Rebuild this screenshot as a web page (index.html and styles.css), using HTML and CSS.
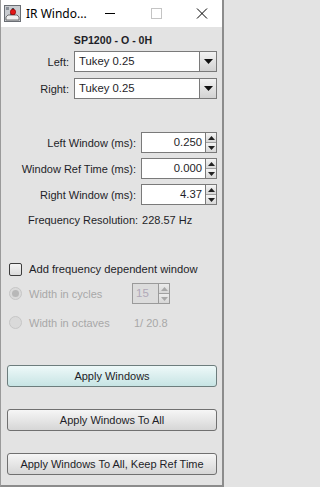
FILE: index.html
```html
<!DOCTYPE html>
<html>
<head>
<meta charset="utf-8">
<link rel="stylesheet" href="styles.css">
</head>
<body>
<div class="window">
  <div class="titlebar">
    <svg class="app-icon" width="17" height="17" viewBox="0 0 17 17">
      <rect x="0.5" y="0.5" width="16" height="16" fill="#c9ccd0" stroke="#6a6e74" stroke-width="1"/>
      <path d="M2 12 L4 10 H13 L15 12 V15 H2 Z" fill="#f0f0f0" stroke="#555" stroke-width="0.8"/>
      <path d="M6 10 L8 3 L10 3 L11 10 Z" fill="#4a4e56"/>
      <circle cx="9" cy="7" r="2.7" fill="#e41818" stroke="#8a0000" stroke-width="0.6"/>
      <rect x="2" y="2" width="3" height="3" fill="#8a9098"/>
    </svg>
    <span class="title-text">IR Windo...</span>
    <div class="title-controls">
      <svg class="ctl ctl-min" width="46" height="27" viewBox="0 0 46 27"><line x1="18" y1="13.5" x2="28" y2="13.5" stroke="#000" stroke-width="1"/></svg>
      <svg class="ctl ctl-max" width="46" height="27" viewBox="0 0 46 27"><rect x="18.5" y="8.5" width="10" height="10" fill="none" stroke="#c4c4c4" stroke-width="1"/></svg>
      <svg class="ctl ctl-close" width="46" height="27" viewBox="0 0 46 27"><path d="M18 8.5 L28 18.5 M28 8.5 L18 18.5" stroke="#000" stroke-width="1"/></svg>
    </div>
  </div>
  <div class="content">
    <div class="heading">SP1200 - O - 0H</div>

    <div class="combo-row">
      <span class="combo-label">Left:</span>
      <div class="combo">
        <span class="combo-text">Tukey 0.25</span>
        <span class="combo-btn"><svg width="9" height="5" viewBox="0 0 9 5"><path d="M0 0 H9 L4.5 5 Z" fill="#111"/></svg></span>
      </div>
    </div>
    <div class="combo-row second">
      <span class="combo-label">Right:</span>
      <div class="combo">
        <span class="combo-text">Tukey 0.25</span>
        <span class="combo-btn"><svg width="9" height="5" viewBox="0 0 9 5"><path d="M0 0 H9 L4.5 5 Z" fill="#111"/></svg></span>
      </div>
    </div>

    <div class="spin-group">
      <div class="spin-row">
        <span class="spin-label">Left Window (ms):</span>
        <div class="spinner">
          <span class="spin-field">0.250</span>
          <span class="spin-btns">
            <span class="spin-btn"><svg width="7" height="4" viewBox="0 0 7 4"><path d="M0 4 H7 L3.5 0 Z" fill="#222"/></svg></span>
            <span class="spin-btn"><svg width="7" height="4" viewBox="0 0 7 4"><path d="M0 0 H7 L3.5 4 Z" fill="#222"/></svg></span>
          </span>
        </div>
      </div>
      <div class="spin-row">
        <span class="spin-label">Window Ref Time (ms):</span>
        <div class="spinner">
          <span class="spin-field">0.000</span>
          <span class="spin-btns">
            <span class="spin-btn"><svg width="7" height="4" viewBox="0 0 7 4"><path d="M0 4 H7 L3.5 0 Z" fill="#222"/></svg></span>
            <span class="spin-btn"><svg width="7" height="4" viewBox="0 0 7 4"><path d="M0 0 H7 L3.5 4 Z" fill="#222"/></svg></span>
          </span>
        </div>
      </div>
      <div class="spin-row">
        <span class="spin-label">Right Window (ms):</span>
        <div class="spinner">
          <span class="spin-field">4.37</span>
          <span class="spin-btns">
            <span class="spin-btn"><svg width="7" height="4" viewBox="0 0 7 4"><path d="M0 4 H7 L3.5 0 Z" fill="#222"/></svg></span>
            <span class="spin-btn"><svg width="7" height="4" viewBox="0 0 7 4"><path d="M0 0 H7 L3.5 4 Z" fill="#222"/></svg></span>
          </span>
        </div>
      </div>
    </div>

    <div class="freq-row">
      <span class="freq-label">Frequency Resolution:</span>
      <span class="freq-value">228.57 Hz</span>
    </div>

    <div class="check-row">
      <span class="checkbox"></span>
      <span class="check-label">Add frequency dependent window</span>
    </div>

    <div class="radio-row">
      <span class="radio selected"><span class="radio-dot"></span></span>
      <span class="radio-label">Width in cycles</span>
      <div class="spinner small disabled">
        <span class="spin-field">15</span>
        <span class="spin-btns">
          <span class="spin-btn"><svg width="7" height="4" viewBox="0 0 7 4"><path d="M0 4 H7 L3.5 0 Z" fill="#a8a8a8"/></svg></span>
          <span class="spin-btn"><svg width="7" height="4" viewBox="0 0 7 4"><path d="M0 0 H7 L3.5 4 Z" fill="#a8a8a8"/></svg></span>
        </span>
      </div>
    </div>
    <div class="radio-row second">
      <span class="radio"></span>
      <span class="radio-label">Width in octaves</span>
      <span class="octave-value">1/ 20.8</span>
    </div>

    <div class="buttons">
      <button class="btn focused">Apply Windows</button>
      <button class="btn">Apply Windows To All</button>
      <button class="btn">Apply Windows To All, Keep Ref Time</button>
    </div>
  </div>
</div>
</body>
</html>
```

FILE: styles.css
```css
* { box-sizing: border-box; }
html, body {
  margin: 0;
  padding: 0;
  background: #e3e3e3;
}
body {
  font-family: "Liberation Sans", Arial, sans-serif;
  font-size: 11px;
  color: #1e1e28;
}
.window {
  width: 224px;
  height: 487px;
  border-left: 1px solid #9a9a9a;
  border-right: 2px solid #8c8c8c;
  border-bottom: 2px solid #8c8c8c;
  background: #e3e3e3;
  overflow: hidden;
}
.titlebar {
  height: 27px;
  background: #ffffff;
  display: flex;
  align-items: center;
  position: relative;
}
.app-icon {
  margin-left: 3px;
  flex: none;
}
.title-text {
  margin-left: 5px;
  font-family: "Noto Sans", "Open Sans", sans-serif;
  font-size: 12px;
  color: #000;
}
.title-controls {
  position: absolute;
  top: 0;
  right: -3px;
  display: flex;
}
.ctl { display: block; }

.content {
  padding: 6px 5px 0 6px;
  display: flex;
  flex-direction: column;
}
.heading {
  font-weight: bold;
  text-align: center;
  line-height: 14px;
  height: 14px;
  font-size: 10.6px;
  padding-left: 2px;
}
.combo-row {
  display: flex;
  align-items: center;
  height: 21px;
  margin-top: 4px;
}
.combo-row.second { margin-top: 6px; }
.combo-label {
  width: 62px;
  text-align: right;
  margin-right: 5px;
  flex: none;
}
.combo {
  flex: 1;
  height: 21px;
  display: flex;
  border: 1px solid #7a7a7a;
  background: #fff;
}
.combo-text {
  flex: 1;
  padding-left: 4px;
  line-height: 19px;
  font-size: 11.3px;
}
.combo-btn {
  width: 17px;
  border-left: 1px solid #7a7a7a;
  background: linear-gradient(#f2f2f2, #d2d2d2);
  display: flex;
  align-items: center;
  justify-content: center;
}

.spin-group {
  margin-top: 33px;
  display: flex;
  flex-direction: column;
  gap: 5px;
}
.spin-row {
  display: flex;
  align-items: center;
  height: 21px;
}
.spin-label {
  width: 129px;
  text-align: right;
  margin-right: 5px;
  flex: none;
}
.spinner {
  display: flex;
  width: 77px;
  height: 21px;
  border: 1px solid #7a7a7a;
  background: #fff;
}
.spin-field {
  flex: 1;
  text-align: right;
  padding-right: 3px;
  line-height: 19px;
  font-size: 11.3px;
}
.spin-btns {
  width: 11px;
  display: flex;
  flex-direction: column;
  border-left: 1px solid #7a7a7a;
}
.spin-btn {
  flex: 1;
  display: flex;
  align-items: center;
  justify-content: center;
  background: linear-gradient(#f4f4f4, #d8d8d8);
}
.spin-btn + .spin-btn { border-top: 1px solid #a0a0a0; }

.freq-row {
  margin-top: 8px;
  line-height: 14px;
  height: 14px;
  padding-left: 21px;
  display: flex;
  gap: 4px;
}

.check-row {
  margin-top: 35px;
  height: 14px;
  display: flex;
  align-items: center;
  padding-left: 2px;
}
.checkbox {
  width: 13px;
  height: 13px;
  border: 1px solid #3c3c3c;
  border-radius: 2px;
  background: linear-gradient(#f4f4f4, #dcdcdc);
  margin-right: 7px;
  flex: none;
}
.check-label { font-size: 11.2px; }

.radio-row {
  margin-top: 7px;
  height: 21px;
  display: flex;
  align-items: center;
  padding-left: 2px;
  color: #a8a8a8;
}
.radio-row.second { margin-top: 8px; }
.radio {
  width: 13px;
  height: 13px;
  border-radius: 50%;
  border: 1px solid #c6c6c6;
  background: #dadada;
  margin-right: 7px;
  flex: none;
  display: flex;
  align-items: center;
  justify-content: center;
}
.radio-dot {
  width: 7px;
  height: 7px;
  border-radius: 50%;
  background: #b8b8b8;
}
.radio-label {
  width: 103px;
  flex: none;
}
.spinner.small {
  width: 38px;
  border-color: #9a9a9a;
  background: #dcdcdc;
}
.spinner.small .spin-field {
  text-align: left;
  padding-left: 3px;
  color: #b0a8b8;
  font-size: 11.5px;
}
.spinner.small .spin-btns { border-left-color: #9a9a9a; }
.spinner.small .spin-btn { background: linear-gradient(#ececec, #d6d6d6); }
.octave-value { padding-left: 2px; }

.buttons {
  margin-top: 32px;
  display: flex;
  flex-direction: column;
  gap: 22px;
}
.btn {
  height: 22px;
  border: 1px solid #707070;
  border-radius: 3px;
  background: linear-gradient(#f6f6f6, #d6d6d6);
  font-family: "Liberation Sans", Arial, sans-serif;
  font-size: 11px;
  color: #1e1e28;
  padding: 0;
  text-align: center;
}
.btn.focused {
  background: linear-gradient(#eef9f9, #c7e4e4);
  border-color: #6d7d7d;
}
```
